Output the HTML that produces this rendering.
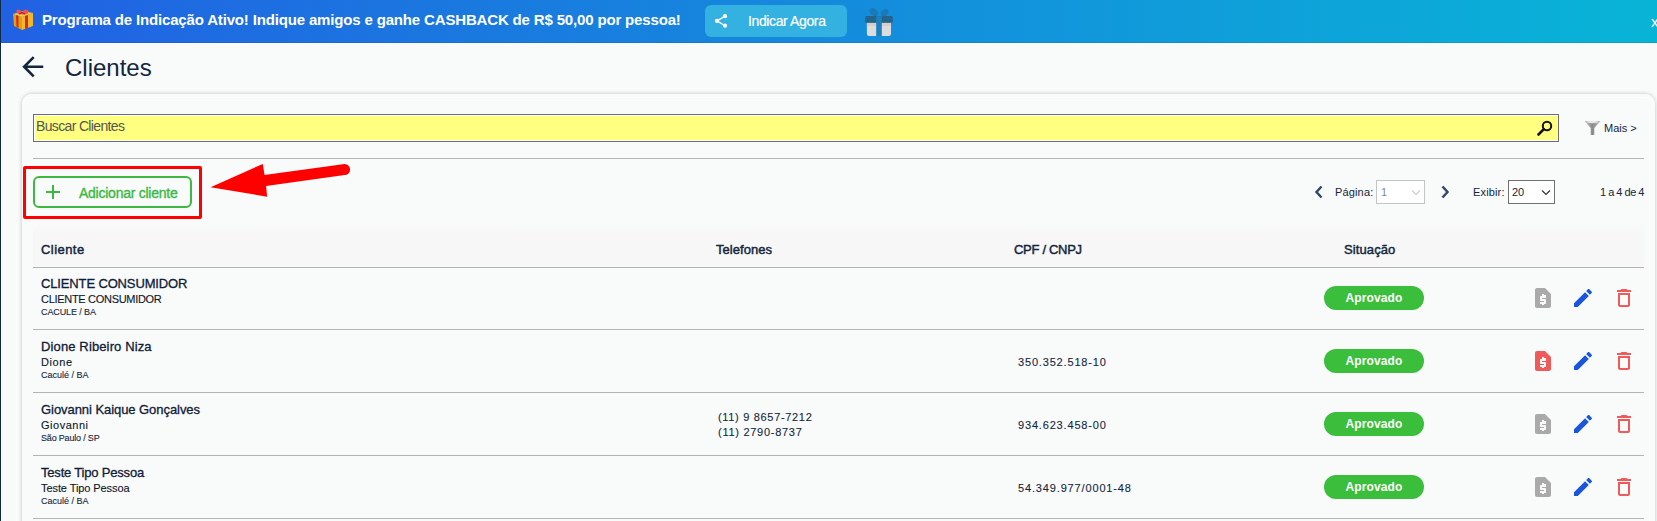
<!DOCTYPE html>
<html><head><meta charset="utf-8">
<style>
*{margin:0;padding:0;box-sizing:border-box}
html,body{width:1657px;height:521px;overflow:hidden;background:#f9fafa;font-family:"Liberation Sans",sans-serif;color:#13263d}
.a{position:absolute;white-space:nowrap}
#lbar{left:0;top:0;width:1px;height:521px;background:#0f2846}
#banner{left:1px;top:0;width:1656px;height:43px;box-shadow:inset 0 -1px 0 rgba(0,0,0,.07),0 1px 0 #fff;background:linear-gradient(90deg,#2161e3,#08b4d6)}
#btxt{left:42px;top:11px;font-size:15px;font-weight:bold;color:#fff;line-height:17px;letter-spacing:-0.16px}
#ibtn{left:705px;top:5px;width:142px;height:32px;border-radius:6px;background:#33b1e0}
#ibtxt{left:748px;top:13px;font-size:14px;color:#fff;line-height:16px;letter-spacing:-0.38px;-webkit-text-stroke:0.2px #fff}
#close{left:1651px;top:13px;font-size:15px;color:#fff;line-height:17px}
#title{left:65px;top:55px;font-size:24px;color:#13263d;line-height:26px}
#card{left:22px;top:94px;width:1633px;height:440px;border-radius:10px;background:#f9fafa;box-shadow:0 0 4px rgba(0,0,0,.24),inset 0 3px 0 #f9fafa,inset 0 4px 0 #fff}
#search{left:33px;top:114px;width:1526px;height:28px;background:#ffff80;border:1px solid #6d6d6d;box-shadow:inset 0 0 0 1px #fff}
#stxt{left:36px;top:118px;font-size:14px;color:#555;line-height:16px;letter-spacing:-0.65px}
#sep{left:33px;top:158px;width:1611px;height:1px;background:#b4b4b4}
#mais{left:1604px;top:122px;font-size:11px;color:#13263d;line-height:12px}
#redbox{left:23px;top:166px;width:179px;height:53px;border:3px solid #f00;border-radius:2px}
#addbtn{left:33px;top:176px;width:159px;height:32px;border:2px solid #3cb843;border-radius:6px}
#addtxt{left:79px;top:185px;font-size:14px;color:#3cb843;line-height:16px;letter-spacing:-0.25px;-webkit-text-stroke:0.35px #3cb843}
.pg{font-size:11px;line-height:12px;color:#13263d}
.sel{background:#fff;height:24px}
#thead{left:33px;top:224px;width:1611px;height:44px;background:linear-gradient(#f8f9f9,#f8f8f8 8px,#f7f7f7 8px);border-radius:10px 0 0 0}
.th{font-size:13px;line-height:15px;color:#13263d;top:242px;-webkit-text-stroke:0.45px #13263d}
.hl{left:33px;width:1611px;height:1px;background:#b4b4b4}
.n1{font-size:13px;line-height:14px;color:#0f2036;-webkit-text-stroke:0.3px #0f2036}
.n2{font-size:11px;line-height:12px;color:#0b1626;-webkit-text-stroke:0.1px #0b1626}
.n3{font-size:9px;line-height:10px;color:#13263d;-webkit-text-stroke:0.1px #13263d}
.td{font-size:11px;line-height:13px;color:#13263d;-webkit-text-stroke:0.1px #13263d}
.badge{left:1324px;width:100px;height:24px;border-radius:12px;background:#3abe3c;color:#fff;font-size:12px;font-weight:bold;text-align:center;line-height:24px;letter-spacing:0.1px}
.ic{width:24px;height:24px}
</style></head><body>
<div class="a" id="lbar"></div>
<div class="a" id="banner"></div>
<div class="a" id="btxt">Programa de Indicação Ativo! Indique amigos e ganhe CASHBACK de R$ 50,00 por pessoa!</div>
<div class="a" id="ibtn"></div>
<div class="a" id="ibtxt">Indicar Agora</div>
<div class="a" id="close">x</div>
<div class="a" id="title">Clientes</div>
<div class="a" id="card"></div>
<div class="a" id="search"></div>
<div class="a" id="stxt">Buscar Clientes</div>
<div class="a" id="sep"></div>
<div class="a" id="mais">Mais &gt;</div>
<div class="a" id="redbox"></div>
<div class="a" id="addbtn"></div>
<div class="a" id="addtxt">Adicionar cliente</div>

<div class="a pg" style="left:1335px;top:186px;letter-spacing:0.15px">Página:</div>
<div class="a sel" style="left:1376px;top:180px;width:49px;border:1px solid #c4c4c4"></div>
<div class="a pg" style="left:1381px;top:186px;color:#7d8a99">1</div>
<div class="a pg" style="left:1473px;top:186px;letter-spacing:0.15px">Exibir:</div>
<div class="a sel" style="left:1508px;top:180px;width:47px;border:1px solid #707070"></div>
<div class="a pg" style="left:1512px;top:186px">20</div>
<div class="a pg" style="left:1600px;top:186px;letter-spacing:-0.5px">1 a 4 de 4</div>

<div class="a" id="thead"></div>
<div class="a th" style="left:41px;letter-spacing:0.45px">Cliente</div>
<div class="a th" style="left:716px;letter-spacing:0.05px">Telefones</div>
<div class="a th" style="left:1014px;letter-spacing:-0.3px">CPF / CNPJ</div>
<div class="a th" style="left:1344px;letter-spacing:0.1px">Situação</div>
<div class="a hl" style="top:267px"></div>
<div class="a hl" style="top:329px"></div>
<div class="a hl" style="top:392px"></div>
<div class="a hl" style="top:455px"></div>
<div class="a hl" style="top:518px"></div>

<div class="a n1" style="left:41px;top:277px;letter-spacing:-0.14px">CLIENTE CONSUMIDOR</div>
<div class="a n2" style="left:41px;top:293px;letter-spacing:-0.3px">CLIENTE CONSUMIDOR</div>
<div class="a n3" style="left:41px;top:307px;letter-spacing:-0.1px">CACULE / BA</div>

<div class="a n1" style="left:41px;top:340px;letter-spacing:0.13px">Dione Ribeiro Niza</div>
<div class="a n2" style="left:41px;top:356px;letter-spacing:0.6px">Dione</div>
<div class="a n3" style="left:41px;top:370px">Caculé / BA</div>

<div class="a n1" style="left:41px;top:403px;letter-spacing:-0.06px">Giovanni Kaique Gonçalves</div>
<div class="a n2" style="left:41px;top:419px;letter-spacing:0.51px">Giovanni</div>
<div class="a n3" style="left:41px;top:433px;letter-spacing:-0.18px">São Paulo / SP</div>

<div class="a n1" style="left:41px;top:466px;letter-spacing:-0.19px">Teste Tipo Pessoa</div>
<div class="a n2" style="left:41px;top:482px;letter-spacing:-0.08px">Teste Tipo Pessoa</div>
<div class="a n3" style="left:41px;top:496px">Caculé / BA</div>

<div class="a td" style="left:718px;top:411px;letter-spacing:0.68px">(11) 9 8657-7212</div>
<div class="a td" style="left:718px;top:426px;letter-spacing:0.72px">(11) 2790-8737</div>
<div class="a td" style="left:1018px;top:356px;letter-spacing:0.83px">350.352.518-10</div>
<div class="a td" style="left:1018px;top:419px;letter-spacing:0.83px">934.623.458-00</div>
<div class="a td" style="left:1018px;top:482px;letter-spacing:0.85px">54.349.977/0001-48</div>

<div class="a badge" style="top:286px">Aprovado</div>
<div class="a badge" style="top:349px">Aprovado</div>
<div class="a badge" style="top:412px">Aprovado</div>
<div class="a badge" style="top:475px">Aprovado</div>

<!-- gift emoji -->
<svg class="a" style="left:12px;top:8px" width="23" height="24" viewBox="0 0 23 24">
 <polygon points="1,6 10,9 10,22 2,18" fill="#e0a010"/>
 <polygon points="10,9 21,5 21,18 10,22" fill="#f2b72a"/>
 <polygon points="1,6 11,3 21,5 10,9" fill="#f8c840"/>
 <polygon points="4,7 6.5,8 6.5,20 4.5,19" fill="#d42a2a"/>
 <polygon points="13,8 16,7 16,20 13,21" fill="#d42a2a"/>
 <path d="M5,5 C3,1 7,0 10,4 C13,0 18,1 16,5 C14,7 7,7 5,5Z" fill="#f05050"/>
 <path d="M7,6 L10,4.5 L13,6" fill="none" stroke="#a01818" stroke-width="1"/>
</svg>
<!-- share icon -->
<svg class="a" style="left:708px;top:8px" width="28" height="26" viewBox="0 0 28 26">
 <line x1="9" y1="12.9" x2="17" y2="8.2" stroke="#fff" stroke-width="1.3"/>
 <line x1="9" y1="12.9" x2="17" y2="17.7" stroke="#fff" stroke-width="1.3"/>
 <circle cx="9" cy="12.9" r="2.1" fill="#fff"/>
 <circle cx="17" cy="8.2" r="2.1" fill="#fff"/>
 <circle cx="17" cy="17.7" r="2.1" fill="#fff"/>
</svg>
<!-- gift 2 -->
<svg class="a" style="left:860px;top:4px" width="38" height="36" viewBox="0 0 38 36">
 <ellipse cx="13.8" cy="8.2" rx="4.6" ry="3.3" transform="rotate(40 13.8 8.2)" fill="#1e78b4"/>
 <ellipse cx="24.6" cy="8.8" rx="4.2" ry="3.1" transform="rotate(-40 24.6 8.8)" fill="#1e78b4"/>
 <path d="M6.9,18.7 H31 V29.5 Q31,32 28.5,32 H9.4 Q6.9,32 6.9,29.5Z" fill="#dcdcdc"/>
 <rect x="6.9" y="18.7" width="24.1" height="3.3" fill="#dfcbc6"/>
 <rect x="5.2" y="12.1" width="27.6" height="6.6" rx="1.5" fill="#22648c"/>
 <rect x="16.2" y="12.1" width="5.6" height="19.9" fill="#1a80c0"/>
</svg>
<!-- back arrow -->
<svg class="a" style="left:16.75px;top:50.75px" width="31.5" height="31.5" viewBox="0 0 24 24"><path d="M20 11H7.83l5.59-5.59L12 4l-8 8 8 8 1.41-1.41L7.83 13H20v-2z" fill="#13263d"/></svg>
<!-- search icon -->
<svg class="a" style="left:1536px;top:119px" width="18" height="18" viewBox="0 0 18 18">
 <circle cx="11" cy="7" r="4.2" fill="none" stroke="#111" stroke-width="2"/>
 <line x1="7.8" y1="10.2" x2="2.5" y2="15.5" stroke="#111" stroke-width="2.6" stroke-linecap="round"/>
</svg>
<!-- filter icon -->
<svg class="a" style="left:1584px;top:120px" width="17" height="16" viewBox="0 0 17 16">
 <defs><linearGradient id="fg" x1="0" x2="1" y1="0" y2="0"><stop offset="0" stop-color="#c8c8c8"/><stop offset=".5" stop-color="#8a8a8a"/><stop offset="1" stop-color="#c0c0c0"/></linearGradient></defs>
 <path d="M0.5,1 H16.5 L10.3,8 V15 H6.7 V8 Z" fill="url(#fg)"/>
 <ellipse cx="8.5" cy="2" rx="6" ry="1.2" fill="#e8e8e8"/>
</svg>
<!-- plus -->
<svg class="a" style="left:46px;top:185px" width="14" height="14" viewBox="0 0 14 14"><path d="M7 0V14M0 7H14" stroke="#3cb843" stroke-width="2"/></svg>
<!-- red arrow -->
<svg class="a" style="left:200px;top:155px" width="160" height="50" viewBox="200 155 160 50">
 <path d="M210.6,187.3 L262.8,163.9 L264.5,175 L344.6,164.1 A5.5,5.5 0 0 1 344.6,175.1 L266.1,185.9 L267.1,196.7 Z" fill="#f00"/>
</svg>
<!-- pagination chevrons -->
<svg class="a" style="left:1312px;top:184px" width="14" height="16" viewBox="0 0 14 16"><path d="M9.5,2.5 L4.5,8 L9.5,13.5" fill="none" stroke="#2c4866" stroke-width="2.4"/></svg>
<svg class="a" style="left:1438px;top:184px" width="14" height="16" viewBox="0 0 14 16"><path d="M4.5,2.5 L9.5,8 L4.5,13.5" fill="none" stroke="#2c4866" stroke-width="2.4"/></svg>
<svg class="a" style="left:1410px;top:188px" width="12" height="9" viewBox="0 0 12 9"><path d="M2,2.5 L6,6.5 L10,2.5" fill="none" stroke="#aaa" stroke-width="1"/></svg>
<svg class="a" style="left:1540px;top:188px" width="12" height="9" viewBox="0 0 12 9"><path d="M2,2.5 L6,6.5 L10,2.5" fill="none" stroke="#333" stroke-width="1.2"/></svg>
<svg class="a" style="left:1531px;top:286px" width="24" height="24" viewBox="0 0 24 24"><path d="M14 2H6c-1.1 0-1.99.9-1.99 2L4 20c0 1.1.89 2 1.99 2H18c1.1 0 2-.9 2-2V8l-6-6zm1 10h-4v1h3c.55 0 1 .45 1 1v3c0 .55-.45 1-1 1h-1v1h-2v-1H9v-2h4v-1h-3c-.55 0-1-.45-1-1v-3c0-.55.45-1 1-1h1V8h2v1h2v2z" fill="#aaaaaa"/></svg>
<svg class="a" style="left:1571px;top:286px" width="24" height="24" viewBox="0 0 24 24"><path d="M3 17.25V21h3.75L17.81 9.94l-3.75-3.75L3 17.25zM20.71 7.04c.39-.39.39-1.02 0-1.41l-2.34-2.34c-.39-.39-1.02-.39-1.41 0l-1.83 1.83 3.75 3.75 1.83-1.83z" fill="#1a56db"/></svg>
<svg class="a" style="left:1612px;top:286px" width="24" height="24" viewBox="0 0 24 24"><path d="M6 19c0 1.1.9 2 2 2h8c1.1 0 2-.9 2-2V7H6v12zM8 9h8v10H8V9zm7.5-5l-1-1h-5l-1 1H5v2h14V4z" fill="#f05a5a"/></svg>
<svg class="a" style="left:1531px;top:349px" width="24" height="24" viewBox="0 0 24 24"><path d="M14 2H6c-1.1 0-1.99.9-1.99 2L4 20c0 1.1.89 2 1.99 2H18c1.1 0 2-.9 2-2V8l-6-6zm1 10h-4v1h3c.55 0 1 .45 1 1v3c0 .55-.45 1-1 1h-1v1h-2v-1H9v-2h4v-1h-3c-.55 0-1-.45-1-1v-3c0-.55.45-1 1-1h1V8h2v1h2v2z" fill="#f05a5a"/></svg>
<svg class="a" style="left:1571px;top:349px" width="24" height="24" viewBox="0 0 24 24"><path d="M3 17.25V21h3.75L17.81 9.94l-3.75-3.75L3 17.25zM20.71 7.04c.39-.39.39-1.02 0-1.41l-2.34-2.34c-.39-.39-1.02-.39-1.41 0l-1.83 1.83 3.75 3.75 1.83-1.83z" fill="#1a56db"/></svg>
<svg class="a" style="left:1612px;top:349px" width="24" height="24" viewBox="0 0 24 24"><path d="M6 19c0 1.1.9 2 2 2h8c1.1 0 2-.9 2-2V7H6v12zM8 9h8v10H8V9zm7.5-5l-1-1h-5l-1 1H5v2h14V4z" fill="#f05a5a"/></svg>
<svg class="a" style="left:1531px;top:412px" width="24" height="24" viewBox="0 0 24 24"><path d="M14 2H6c-1.1 0-1.99.9-1.99 2L4 20c0 1.1.89 2 1.99 2H18c1.1 0 2-.9 2-2V8l-6-6zm1 10h-4v1h3c.55 0 1 .45 1 1v3c0 .55-.45 1-1 1h-1v1h-2v-1H9v-2h4v-1h-3c-.55 0-1-.45-1-1v-3c0-.55.45-1 1-1h1V8h2v1h2v2z" fill="#aaaaaa"/></svg>
<svg class="a" style="left:1571px;top:412px" width="24" height="24" viewBox="0 0 24 24"><path d="M3 17.25V21h3.75L17.81 9.94l-3.75-3.75L3 17.25zM20.71 7.04c.39-.39.39-1.02 0-1.41l-2.34-2.34c-.39-.39-1.02-.39-1.41 0l-1.83 1.83 3.75 3.75 1.83-1.83z" fill="#1a56db"/></svg>
<svg class="a" style="left:1612px;top:412px" width="24" height="24" viewBox="0 0 24 24"><path d="M6 19c0 1.1.9 2 2 2h8c1.1 0 2-.9 2-2V7H6v12zM8 9h8v10H8V9zm7.5-5l-1-1h-5l-1 1H5v2h14V4z" fill="#f05a5a"/></svg>
<svg class="a" style="left:1531px;top:475px" width="24" height="24" viewBox="0 0 24 24"><path d="M14 2H6c-1.1 0-1.99.9-1.99 2L4 20c0 1.1.89 2 1.99 2H18c1.1 0 2-.9 2-2V8l-6-6zm1 10h-4v1h3c.55 0 1 .45 1 1v3c0 .55-.45 1-1 1h-1v1h-2v-1H9v-2h4v-1h-3c-.55 0-1-.45-1-1v-3c0-.55.45-1 1-1h1V8h2v1h2v2z" fill="#aaaaaa"/></svg>
<svg class="a" style="left:1571px;top:475px" width="24" height="24" viewBox="0 0 24 24"><path d="M3 17.25V21h3.75L17.81 9.94l-3.75-3.75L3 17.25zM20.71 7.04c.39-.39.39-1.02 0-1.41l-2.34-2.34c-.39-.39-1.02-.39-1.41 0l-1.83 1.83 3.75 3.75 1.83-1.83z" fill="#1a56db"/></svg>
<svg class="a" style="left:1612px;top:475px" width="24" height="24" viewBox="0 0 24 24"><path d="M6 19c0 1.1.9 2 2 2h8c1.1 0 2-.9 2-2V7H6v12zM8 9h8v10H8V9zm7.5-5l-1-1h-5l-1 1H5v2h14V4z" fill="#f05a5a"/></svg>
</body></html>
